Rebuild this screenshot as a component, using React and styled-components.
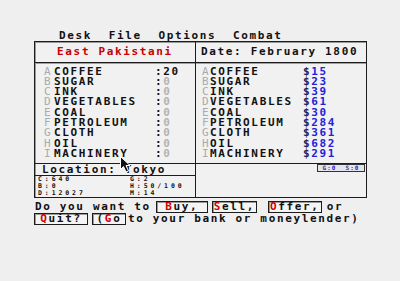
import styled, { createGlobalStyle } from "styled-components";

const hold = [
  ["A", "COFFEE", 20],
  ["B", "SUGAR", 0],
  ["C", "INK", 0],
  ["D", "VEGETABLES", 0],
  ["E", "COAL", 0],
  ["F", "PETROLEUM", 0],
  ["G", "CLOTH", 0],
  ["H", "OIL", 0],
  ["I", "MACHINERY", 0],
];

const prices = [
  ["A", "COFFEE", 15],
  ["B", "SUGAR", 23],
  ["C", "INK", 39],
  ["D", "VEGETABLES", 61],
  ["E", "COAL", 30],
  ["F", "PETROLEUM", 284],
  ["G", "CLOTH", 361],
  ["H", "OIL", 682],
  ["I", "MACHINERY", 291],
];

const App = () => {
  return (
    <Page>
      <Global />
      <MenuBar>
        <span>Desk</span>
        <span>File</span>
        <span>Options</span>
        <span>Combat</span>
      </MenuBar>
      <Frame>
        <Column $divider>
          <Header $center $red>East Pakistani</Header>
          <List>
            {hold.map(([k, name, qty]) => (
              <Row key={k} $cols="10px 101px auto" $pl={9}>
                <Key>{k}</Key>
                <span>{name}</span>
                <span>
                  :<Qty $empty={qty === 0}>{qty}</Qty>
                </span>
              </Row>
            ))}
          </List>
          <Location>Location: Tokyo</Location>
          <Stats>
            <div>
              <div>C:640</div>
              <div>B:0</div>
              <div>D:12027</div>
            </div>
            <div>
              <div>G:2</div>
              <div>H:50/100</div>
              <div>M:14</div>
            </div>
          </Stats>
        </Column>
        <Column>
          <Header>Date: February 1800</Header>
          <List>
            {prices.map(([k, name, p]) => (
              <Row key={k} $cols="8px 93px auto" $pl={6}>
                <Key>{k}</Key>
                <span>{name}</span>
                <span>
                  <Dollar>$</Dollar>
                  <Price>{p}</Price>
                </span>
              </Row>
            ))}
          </List>
          <Purse>
            <Badge>
              <span>
                G:<Price>0</Price>
              </span>
              <span>
                S:<Price>0</Price>
              </span>
            </Badge>
          </Purse>
        </Column>
      </Frame>
      <Prompt>
        <Line>
          <Words $ml={1}>Do you want to</Words>
          <Button $w={52} $ml={5}>
            <Hot>B</Hot>uy,
          </Button>
          <Button $w={45} $ml={4}>
            <Hot>S</Hot>ell,
          </Button>
          <Button $w={54} $ml={11}>
            <Hot>O</Hot>ffer,
          </Button>
          <Words $ml={5}>or</Words>
        </Line>
        <Line>
          <Button $w={54}>
            <Hot>Q</Hot>uit?
          </Button>
          <Button $w={34} $ml={4}>
            (<Hot>G</Hot>o
          </Button>
          <Words $ml={2}>to your bank or moneylender)</Words>
        </Line>
      </Prompt>
      <Cursor width="11" height="17" viewBox="0 0 11 17">
        <path
          d="M0.5 0.5 L0.5 13.5 L3.5 10.5 L6 16 L8.5 15 L6 9.5 L10 9.5 Z"
          fill="#111"
          stroke="#fff"
          strokeWidth="1"
        />
      </Cursor>
    </Page>
  );
};

const Global = createGlobalStyle`
  body {
    margin: 0;
    background: #efefef;
  }
`;

const Page = styled.div`
  position: relative;
  width: 400px;
  height: 281px;
  box-sizing: border-box;
  padding-top: 30px;
  background: #efefef;
  color: #111;
  font-family: "DejaVu Sans Mono", "Liberation Mono", monospace;
  font-weight: bold;
  font-size: 11px;
  letter-spacing: 1.65px;
`;

const MenuBar = styled.div`
  display: flex;
  gap: 16.6px;
  padding-left: 59px;
  height: 11px;
  line-height: 11px;
`;

const Frame = styled.div`
  margin-left: 34px;
  width: 333px;
  box-sizing: border-box;
  border: 1px solid #1c1c1c;
  box-shadow: inset 1px 1px 0 #9a9a9a;
  display: grid;
  grid-template-columns: 161px 1fr;
  background: #f1f1f1;
`;

const Column = styled.div`
  display: flex;
  flex-direction: column;
  border-right: ${(p) => (p.$divider ? "1px solid #1c1c1c" : "none")};
`;

const Header = styled.div`
  height: 20px;
  line-height: 20px;
  padding-left: ${(p) => (p.$center ? 0 : 5)}px;
  text-align: ${(p) => (p.$center ? "center" : "left")};
  color: ${(p) => (p.$red ? "#c80000" : "#111")};
`;

const List = styled.div`
  height: 101px;
  box-sizing: border-box;
  padding-top: 3.5px;
  border-top: 1px solid #1c1c1c;
  box-shadow: inset 0 1px 0 #a0a0a0;
`;

const Row = styled.div`
  display: grid;
  grid-template-columns: ${(p) => p.$cols};
  padding-left: ${(p) => p.$pl}px;
  height: 10.3px;
  line-height: 10.3px;
  white-space: nowrap;
`;

const Key = styled.span`
  color: #ababab;
  font-weight: normal;
`;

const Qty = styled.span`
  color: ${(p) => (p.$empty ? "#b4b4b4" : "#111")};
`;

const Dollar = styled.span`
  color: #24245e;
`;

const Price = styled.span`
  color: #2222d8;
`;

const Location = styled.div`
  height: 12px;
  box-sizing: border-box;
  border-top: 1px solid #1c1c1c;
  line-height: 11px;
  padding-left: 7px;
`;

const Stats = styled.div`
  display: grid;
  grid-template-columns: 92px 1fr;
  height: 22px;
  box-sizing: border-box;
  border-top: 1px solid #1c1c1c;
  padding: 0 0 0 3px;
  font-size: 6.5px;
  line-height: 7px;
  letter-spacing: 2.9px;
`;

const Purse = styled.div`
  flex: 1;
  display: flex;
  justify-content: flex-end;
  align-items: flex-start;
  border-top: 1px solid #1c1c1c;
  padding-right: 1px;
`;

const Badge = styled.div`
  display: flex;
  justify-content: space-around;
  width: 48px;
  height: 8px;
  box-sizing: border-box;
  border: 1px solid #333;
  background: #e4e4f0;
  color: #3a3a5a;
  font-size: 6px;
  line-height: 6px;
  letter-spacing: 1px;
`;

const Prompt = styled.div`
  margin: 3px 0 0 34px;
`;

const Line = styled.div`
  display: flex;
  align-items: center;
  height: 12px;
  line-height: 12px;
  white-space: pre;
`;

const Words = styled.span`
  margin-left: ${(p) => p.$ml || 0}px;
`;

const Button = styled.span`
  box-sizing: border-box;
  width: ${(p) => p.$w}px;
  height: 12px;
  line-height: 10px;
  margin-left: ${(p) => p.$ml || 0}px;
  text-align: center;
  border: 1px solid #1c1c1c;
  box-shadow: inset 1px 1px 0 #9a9a9a;
  background: #f4f4f4;
`;

const Hot = styled.span`
  color: #d00000;
`;

const Cursor = styled.svg`
  position: absolute;
  left: 120px;
  top: 156px;
`;

export default App;
